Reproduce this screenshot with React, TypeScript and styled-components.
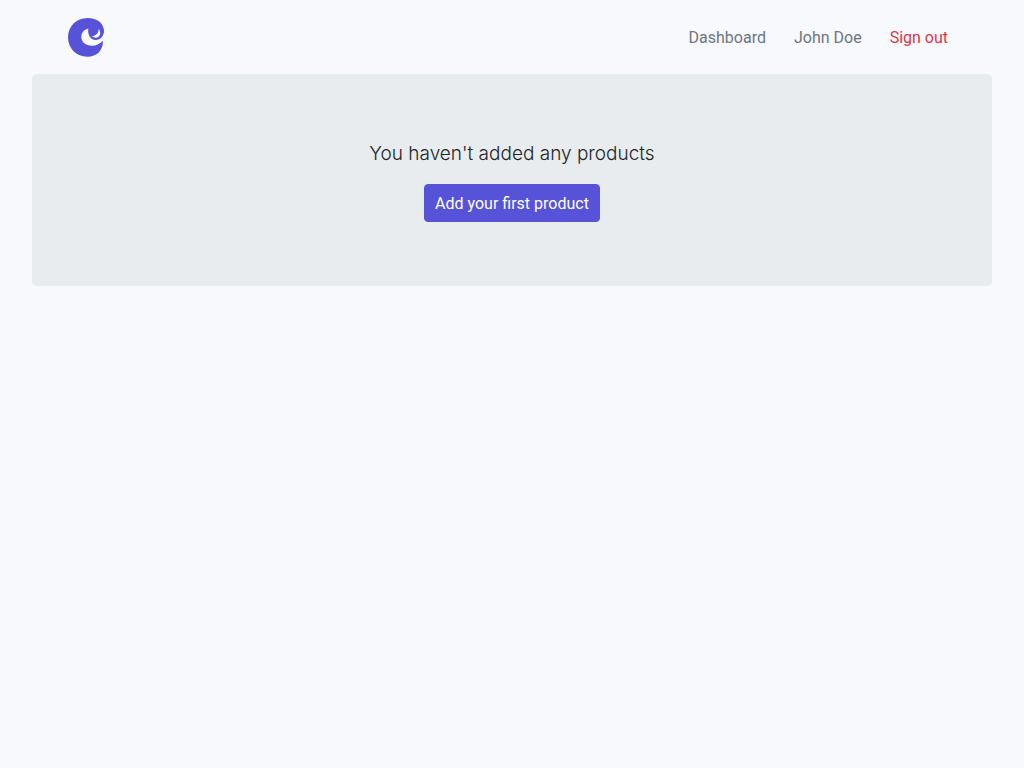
import React from "react";
import styled, { createGlobalStyle } from "styled-components";

const GlobalStyle = createGlobalStyle`
  *, *::before, *::after { box-sizing: border-box; }
  body {
    margin: 0;
    background: #f8f9fd;
    color: #212529;
    font-family: Roboto, "Liberation Sans", sans-serif;
    font-size: 16px;
    line-height: 24px;
  }
`;

const Page = styled.div`
  padding: 0 32px;
`;

const Header = styled.header`
  display: flex;
  align-items: center;
  justify-content: space-between;
  min-height: 74px;
  padding: 0 30px 0 36px;
`;

const Brand = styled.a`
  display: flex;
  color: #5753d8;
`;

const Nav = styled.nav`
  display: flex;
`;

const NavLink = styled.a<{ $danger?: boolean }>`
  padding: 9px 14px 7px;
  color: ${(p) => (p.$danger ? "#dc3545" : "#6c757d")};
  text-decoration: none;
`;

const EmptyPanel = styled.main`
  display: flex;
  flex-direction: column;
  align-items: center;
  gap: 16px;
  padding: 64px 32px;
  border-radius: 5px;
  background: #e8ecef;
`;

const Message = styled.h1`
  margin: 0;
  padding-top: 2px;
  font-family: Inter, "Liberation Sans", sans-serif;
  font-size: 19px;
  font-weight: 300;
  line-height: 28px;
`;

const PrimaryButton = styled.button`
  padding: 7px 10px 5px;
  border: 1px solid #5753d8;
  border-radius: 4px;
  background: #5753d8;
  color: #fff;
  font: inherit;
  cursor: pointer;
`;

const Logo = () => (
  <svg width="36" height="39" viewBox="24 23 108 117" aria-hidden="true">
    <path
      fill="currentColor"
      d="M82 23C49 23 24 48 24 81C24 115 49 139 82 139C111 139 129 120 129 91C119 101 108 106 96 106C77 106 64 95 64 80C64 67 72 57 85 55C82 72 91 88 107 89C122 89 132 76 132 62C132 39 111 23 82 23ZM116 55C126 68 119 82 107 82C103 82 99 80 96 78C108 76 116 68 116 55Z"
    />
  </svg>
);

export default function App() {
  return (
    <>
      <GlobalStyle />
      <Page>
        <Header>
          <Brand href="#" aria-label="Home">
            <Logo />
          </Brand>
          <Nav>
            <NavLink href="#dashboard">Dashboard</NavLink>
            <NavLink href="#account">John Doe</NavLink>
            <NavLink href="#sign-out" $danger>
              Sign out
            </NavLink>
          </Nav>
        </Header>
        <EmptyPanel>
          <Message>You haven't added any products</Message>
          <PrimaryButton type="button">Add your first product</PrimaryButton>
        </EmptyPanel>
      </Page>
    </>
  );
}
